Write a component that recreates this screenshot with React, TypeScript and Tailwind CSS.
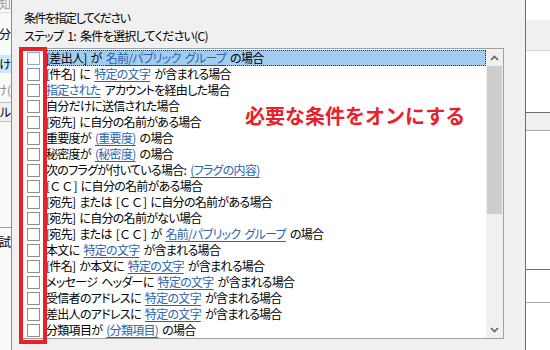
import React from 'react'

type Seg = string | { link: string }

const rows: Seg[][] = [
  ['[差出人] が ', { link: '名前/パブリック グループ' }, ' の場合'],
  ['[件名] に ', { link: '特定の文字' }, ' が含まれる場合'],
  [{ link: '指定された' }, ' アカウントを経由した場合'],
  ['自分だけに送信された場合'],
  ['[宛先] に自分の名前がある場合'],
  ['重要度が ', { link: '(重要度)' }, ' の場合'],
  ['秘密度が ', { link: '(秘密度)' }, ' の場合'],
  ['次のフラグが付いている場合: ', { link: '(フラグの内容)' }],
  ['[ＣＣ] に自分の名前がある場合'],
  ['[宛先] または [ＣＣ] に自分の名前がある場合'],
  ['[宛先] に自分の名前がない場合'],
  ['[宛先] または [ＣＣ] が ', { link: '名前/パブリック グループ' }, ' の場合'],
  ['本文に ', { link: '特定の文字' }, ' が含まれる場合'],
  ['[件名] か本文に ', { link: '特定の文字' }, ' が含まれる場合'],
  ['メッセージ ヘッダーに ', { link: '特定の文字' }, ' が含まれる場合'],
  ['受信者のアドレスに ', { link: '特定の文字' }, ' が含まれる場合'],
  ['差出人のアドレスに ', { link: '特定の文字' }, ' が含まれる場合'],
  ['分類項目が ', { link: '(分類項目)' }, ' の場合'],
]

// full-width "ＣＣ" keeps its full width, like the dialog font
function Plain({ text }: { text: string }) {
  const parts = text.split('ＣＣ')
  return (
    <span className="whitespace-pre">
      {parts.map((p, i) => (
        <React.Fragment key={i}>
          {i > 0 && <span className="[font-feature-settings:normal] tracking-normal">ＣＣ</span>}
          {p}
        </React.Fragment>
      ))}
    </span>
  )
}

function Chevron({ up }: { up?: boolean }) {
  return (
    <svg width="9" height="6" viewBox="0 0 9 6" className="block">
      <polyline
        points={up ? '1,5 4.5,1.5 8,5' : '1,1 4.5,4.5 8,1'}
        fill="none"
        stroke="#606060"
        strokeWidth="1.6"
      />
    </svg>
  )
}

export default function App() {
  return (
    <div className="relative w-[550px] h-[350px] overflow-hidden flex bg-white font-['Noto_Sans_CJK_JP',sans-serif] [font-feature-settings:'palt'] text-black">
      {/* background window, left side */}
      <div className="w-[11px] shrink-0 flex flex-col text-[12px] leading-[16px] overflow-hidden bg-[#fafafa]">
        <div className="h-[17px] flex justify-end items-start text-[#9a9a9a] -mt-[4px] whitespace-nowrap border-b border-[#dcdcdc]">通知</div>
        <div className="h-[13px]" />
        <div className="h-[16px] flex justify-end whitespace-nowrap">分</div>
        <div className="h-[13px]" />
        <div className="h-[18px] flex justify-end items-center whitespace-nowrap bg-[#cce8ff]">かけ</div>
        <div className="h-[9px]" />
        <div className="h-[15px] flex justify-end whitespace-nowrap text-[#8a8a8a]">かけ(</div>
        <div className="h-[6px] border-b border-[#bdbdbd]" />
        <div className="h-[19px] flex justify-end items-center whitespace-nowrap bg-[#f0f0f0] border-b border-[#bdbdbd]">ール</div>
        <div className="h-[106px] border-b border-[#9a9a9a]" />
        <div className="h-[16px] mt-[6px] flex justify-end whitespace-nowrap">の試</div>
      </div>

      {/* dialog */}
      <div className="w-[515px] shrink-0 bg-[#f0f0f0] border-l border-r border-l-[#8c8c8c] border-r-[#6e6e6e] flex flex-col">
        <div className="pl-[12px] pt-[10px] text-[12px] leading-[16px] tracking-[-1.5px]">条件を指定してください</div>
        <div className="pl-[12px] pt-[2px] text-[12px] leading-[16px] tracking-[-0.7px] [word-spacing:2px]">ステップ 1: 条件を選択してください(C)</div>
        <div className="ml-[10px] mt-[4px] w-[482px] h-[291px] bg-white border border-[#a0a0a0] flex">
          <div className="flex-1 flex flex-col pt-[1px]">
            {rows.map((segs, i) => (
              <div key={i} className="h-[16px] flex items-center">
                <div
                  className={`ml-[4px] w-[13px] h-[13px] shrink-0 bg-white border ${i === 0 ? 'border-[#7eb4ea]' : 'border-[#8f8f8f]'}`}
                />
                <div
                  className={`ml-[3px] h-[16px] flex-1 flex items-center whitespace-nowrap text-[12px] leading-[16px] tracking-[-0.7px] [word-spacing:2px] pl-[3px] ${i === 0 ? 'bg-[#a3cdf0] outline outline-1 outline-dotted outline-[#333] -outline-offset-1' : ''}`}
                >
                  {segs.map((s, j) =>
                    typeof s === 'string' ? (
                      <Plain key={j} text={s} />
                    ) : (
                      <span key={j} className="text-[#2b64aa] underline underline-offset-2">{s.link}</span>
                    )
                  )}
                </div>
              </div>
            ))}
          </div>
          {/* scrollbar */}
          <div className="w-[17px] shrink-0 bg-[#f0f0f0] flex flex-col">
            <div className="h-[17px] flex items-center justify-center"><Chevron up /></div>
            <div className="h-[148px] mx-[1px] bg-[#cdcdcd]" />
            <div className="flex-1" />
            <div className="h-[17px] flex items-center justify-center"><Chevron /></div>
          </div>
        </div>
      </div>

      {/* background window, right side */}
      <div className="flex-1 flex flex-col bg-white">
        <div className="h-[20px]" />
        <div className="h-[31px] bg-[#f0f0f0] border-b border-[#d6d6d6]" />
        <div className="h-[61px]" />
        <div className="h-[19px] bg-[#f0f0f0] border-t border-b border-t-[#6e6e6e] border-b-[#a8a8a8]" />
        <div className="h-[139px] border-b border-[#6e6e6e]" />
        <div className="h-[33px] border-b border-[#ababab]" />
      </div>

      {/* annotation overlay */}
      <div className="absolute left-[19px] top-[47px] w-[28px] h-[297px] border-4 border-[#e8202a]" />
      <div className="absolute left-[245px] top-[103px] text-[20px] leading-[26px] font-bold text-[#e8202a] [font-feature-settings:normal] whitespace-nowrap">
        必要な条件をオンにする
      </div>
    </div>
  )
}
